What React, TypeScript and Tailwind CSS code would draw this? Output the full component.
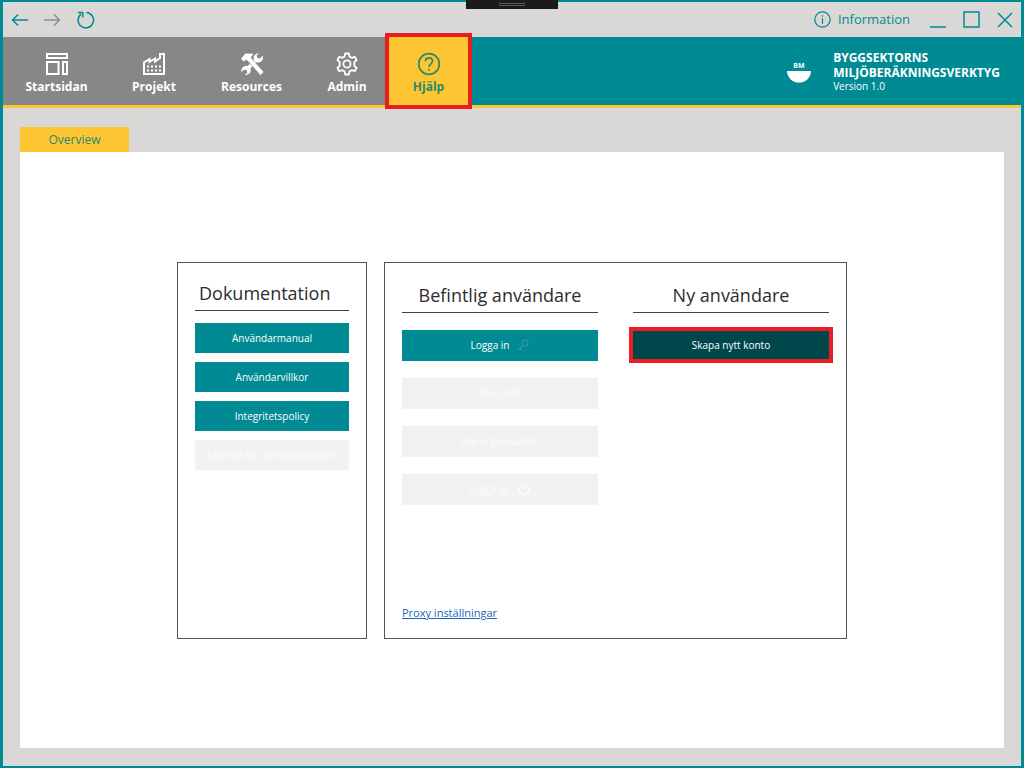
import React from "react";

type NavItem = {
  label: string;
  width: string;
  icon: React.ReactNode;
};

const StartIcon = () => (
  <svg className="h-6 w-6" viewBox="0 0 24 24" fill="none" stroke="currentColor" strokeWidth="2" aria-hidden="true">
    <path d="M2 2h20v4H2zM2 10h11.500v12H2zM18 10h4v12h-4z" />
  </svg>
);

const FactoryIcon = () => (
  <svg className="h-6 w-6" viewBox="0 0 24 24" fill="none" stroke="currentColor" strokeWidth="2" aria-hidden="true">
    <path d="M2 22V10.500L7.500 7v3L13 6.500v3L18 6V2h4v20z" />
    <path d="M5 14.500h14M5 18.500h14" strokeDasharray="2 2" />
  </svg>
);

const ToolsIcon = () => (
  <svg className="h-6 w-6" viewBox="0 0 24 24" aria-hidden="true">
    <path fill="currentColor" d="M18.800 1.200a5 5 0 0 0-5 6.500L7.700 14a5 5 0 0 0-6.200 6l2.800-2.500 2.500.8.500 2.400-2.600 2.200a5 5 0 0 0 5.800-6.600l6-6a5 5 0 0 0 6.200-6.500L20 6.600l-2.700-.7-.7-2.500z" />
    <path fill="currentColor" stroke="#878787" strokeWidth=".6" d="M.8 6.500 5.300 1.300h7l1.200 1.200-2.500 2.700 1.300 2L23.800 20l-3.300 3.500L8.500 9.800 6.300 8 3.500 9.800z" />
  </svg>
);

const GearIcon = () => (
  <svg className="h-6 w-6" viewBox="0 0 24 24" fill="none" stroke="currentColor" strokeWidth="1.800" strokeLinejoin="round" aria-hidden="true">
    <path d="M10.200 1.500h3.600l.7 3.100 2.200 1.200 3-1 1.900 3.200-2.300 2.200v3.600l2.300 2.200-1.900 3.200-3-1-2.200 1.200-.7 3.100h-3.600l-.7-3.100-2.200-1.200-3 1L2.400 16l2.300-2.200v-3.600L2.400 8l1.900-3.200 3 1 2.200-1.200z" />
    <circle cx="12" cy="12" r="3.600" />
  </svg>
);

const HelpIcon = () => (
  <svg className="h-6 w-6" viewBox="0 0 24 24" fill="none" stroke="currentColor" strokeWidth="1.700" aria-hidden="true">
    <circle cx="12" cy="12" r="10.300" />
    <path d="M8.500 9.300c0-2 1.400-3.400 3.500-3.400s3.500 1.300 3.500 3.200c0 2.500-3.500 3-3.500 6" />
    <circle cx="12" cy="17.800" r="1" fill="currentColor" stroke="none" />
  </svg>
);

const navItems: NavItem[] = [
  { label: "Startsidan", width: "w-[107px]", icon: <StartIcon /> },
  { label: "Projekt", width: "w-[88px]", icon: <FactoryIcon /> },
  { label: "Resources", width: "w-[107px]", icon: <ToolsIcon /> },
  { label: "Admin", width: "w-[84px]", icon: <GearIcon /> },
];

const TitleBar = () => (
  <div className="flex h-[35px] items-center justify-between px-2 text-[#008a93]">
    <div className="flex items-center gap-4">
      <button aria-label="Back">
        <svg className="h-4 w-[17px]" viewBox="0 0 17 16" fill="none" stroke="currentColor" strokeWidth="1.500">
          <path d="M17 8H1.500M7 2.500 1.500 8 7 13.500" />
        </svg>
      </button>
      <button aria-label="Forward" className="text-[#8e8e8e]">
        <svg className="h-4 w-[17px]" viewBox="0 0 17 16" fill="none" stroke="currentColor" strokeWidth="1.500">
          <path d="M0 8h15.500M10 2.500 15.500 8 10 13.500" />
        </svg>
      </button>
      <button aria-label="Refresh">
        <svg className="h-[18px] w-[18px]" viewBox="0 0 18 18" fill="none" stroke="currentColor" strokeWidth="1.500">
          <path d="M9.500 1.500A7.700 7.700 0 1 1 4 3.200M.8 1.500h5v5" />
        </svg>
      </button>
    </div>
    <div className="flex items-center">
      <button className="flex items-center gap-[7px] text-[13px]">
        <svg className="h-[17px] w-[17px]" viewBox="0 0 17 17" fill="none" stroke="currentColor" strokeWidth="1.200">
          <circle cx="8.500" cy="8.500" r="7.700" />
          <path d="M8.500 7.200V13M8.500 4.300v1.500" />
        </svg>
        Information
      </button>
      <button aria-label="Minimize" className="ml-5">
        <svg className="h-[17px] w-4" viewBox="0 0 16 17" stroke="currentColor" strokeWidth="1.500">
          <path d="M0 16h16" />
        </svg>
      </button>
      <button aria-label="Maximize" className="ml-[17px]">
        <svg className="h-[17px] w-[17px]" viewBox="0 0 17 17" fill="none" stroke="currentColor" strokeWidth="1.500">
          <path d="M1 1h15v15H1z" />
        </svg>
      </button>
      <button aria-label="Close" className="ml-[17px]">
        <svg className="h-4 w-4" viewBox="0 0 16 16" stroke="currentColor" strokeWidth="1.500">
          <path d="m1 1 14 14M15 1 1 15" />
        </svg>
      </button>
    </div>
  </div>
);

const Header = () => (
  <header className="flex h-[71px] justify-between border-b-3 border-[#fec532] bg-[#008a93] text-white">
    <nav className="flex text-[12px] font-bold">
      {navItems.map((item) => (
        <button
          key={item.label}
          className={`${item.width} flex flex-col items-center bg-[#878787] pt-[15px] leading-[22px] whitespace-nowrap`}
        >
          {item.icon}
          {item.label}
        </button>
      ))}
      <button className="relative flex w-[79px] flex-col items-center bg-[#fec532] pt-[15px] leading-[22px] text-[#2b8a6c] outline-4 outline-[#ea1c24]">
        <HelpIcon />
        Hjälp
      </button>
    </nav>
    <div className="flex items-center gap-[22px] pr-[21px]">
      <svg className="h-6 w-6" viewBox="0 0 24 24" aria-hidden="true">
        <path d="M0 12h24a12 11.500 0 0 1-24 0z" fill="#fff" />
        <text x="12" y="9" fontSize="7" fontWeight="700" textAnchor="middle" fill="#fff">BM</text>
      </svg>
      <div className="text-[12px] leading-[15px] font-bold">
        <p>BYGGSEKTORNS</p>
        <p>MILJÖBERÄKNINGSVERKTYG</p>
        <p className="text-[10px] leading-[13px] font-normal">Version 1.0</p>
      </div>
    </div>
  </header>
);

const PanelTitle = ({ children, align = "text-center" }: { children: React.ReactNode; align?: string }) => (
  <h2 className={`${align} h-[34px] border-b border-[#444] text-[18px] leading-8 whitespace-nowrap text-[#2d2d2d]`}>{children}</h2>
);

const ActionButton = ({ children, disabled, className = "" }: { children: React.ReactNode; disabled?: boolean; className?: string }) => (
  <button
    disabled={disabled}
    className={`flex items-center justify-center gap-2 text-[10px] leading-4 font-medium whitespace-nowrap ${disabled ? "bg-[#f2f2f2] text-[#fcfcfc]" : "bg-[#008a93] text-white"} ${className}`}
  >
    {children}
  </button>
);

const DocumentationPanel = () => (
  <section className="w-[190px] border border-[#555] px-[17px] pt-[14px]">
    <PanelTitle align="pl-1 text-left">Dokumentation</PanelTitle>
    <div className="mt-3 flex flex-col gap-[9px]">
      <ActionButton className="h-[30px]">Användarmanual</ActionButton>
      <ActionButton className="h-[30px]">Användarvillkor</ActionButton>
      <ActionButton className="h-[30px]">Integritetspolicy</ActionButton>
      <ActionButton className="h-[30px]" disabled>Manual för administratören</ActionButton>
    </div>
  </section>
);

const UserPanel = () => (
  <section className="flex w-[463px] justify-between border border-[#555] px-[17px] pt-4 pb-4">
    <div className="flex w-[196px] flex-col">
      <PanelTitle>Befintlig användare</PanelTitle>
      <div className="mt-[17px] flex flex-col gap-[17px]">
        <ActionButton className="h-[31px]">
          Logga in
          <svg className="h-3 w-3 text-[#2b98a0]" viewBox="0 0 12 12" fill="none" stroke="currentColor" strokeWidth="1.300" aria-hidden="true">
            <circle cx="8" cy="4" r="3" />
            <path d="M6 6.500 1 11M3 9l2 2" />
          </svg>
        </ActionButton>
        <ActionButton className="h-[31px]" disabled>Din profil</ActionButton>
        <ActionButton className="h-[31px]" disabled>Din organisation</ActionButton>
        <ActionButton className="h-[31px]" disabled>
          Logga ut
          <svg className="h-[14px] w-[14px]" viewBox="0 0 14 14" fill="none" stroke="currentColor" strokeWidth="1.500" aria-hidden="true">
            <path d="M4.500 2.700a5.300 5.300 0 1 0 5 0M7 1v6" />
          </svg>
        </ActionButton>
      </div>
      <a href="#" className="mt-auto self-start text-[11px] leading-[18px] text-[#1c66b8] underline">Proxy inställningar</a>
    </div>
    <div className="flex w-[196px] flex-col">
      <PanelTitle>Ny användare</PanelTitle>
      <button className="mt-[18px] h-7 bg-[#00474c] text-[10px] leading-4 font-medium text-white outline-4 outline-[#ea1c24]">Skapa nytt konto</button>
    </div>
  </section>
);

const App = () => {
  return (
    <div className="relative flex min-h-screen flex-col border-x-3 border-y-2 border-[#008a93] bg-[#d9d8d6] font-['Open_Sans','Noto_Sans',sans-serif]">
      <TitleBar />
      <Header />
      {/* window handle */}
      <div className="absolute -top-0.5 left-[463px] flex h-[9px] w-[92px] items-center justify-center bg-[#1b1b1b]">
        <div className="h-[3px] w-[26px] border-y border-[#5a5a5a]" />
      </div>
      <main className="flex flex-1 flex-col px-[17px] pt-[19px] pb-[18px]">
        <button className="h-[25px] w-[109px] self-start bg-[#fec532] text-[12px] text-[#2b8a6c]">Overview</button>
        <div className="flex flex-1 items-center justify-center bg-white">
          <div className="flex h-[377px] gap-[17px]">
            <DocumentationPanel />
            <UserPanel />
          </div>
        </div>
      </main>
    </div>
  );
};

export default App;
